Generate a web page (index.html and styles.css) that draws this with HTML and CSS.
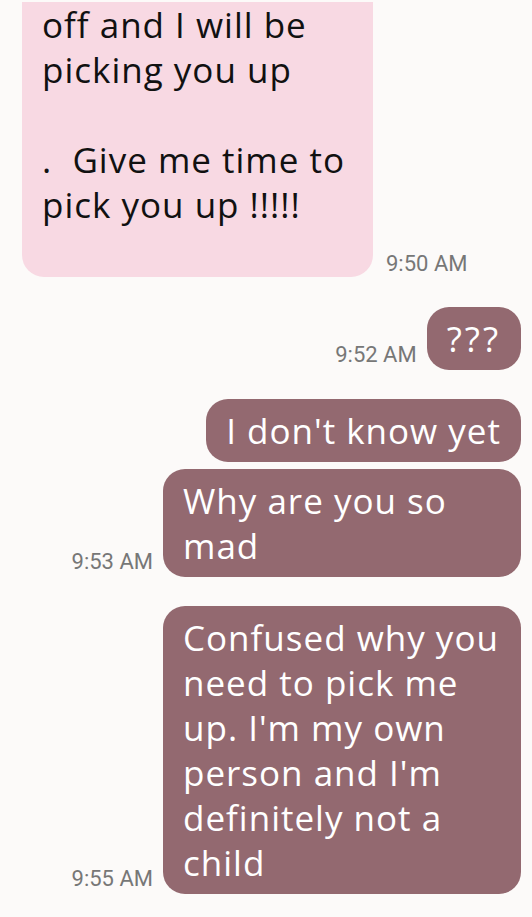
FILE: index.html
```html
<!DOCTYPE html>
<html lang="en">
<head>
    <meta charset="UTF-8">
    <meta name="viewport" content="width=device-width, initial-scale=1.0">
    <title>Messages</title>
    <link rel="stylesheet" href="styles.css">
</head>
<body>
    <div class="thread">
        <div class="row incoming first">
            <div class="bubble in">off and I will be
picking you up

.  Give me time to
pick you up !!!!!</div>
            <span class="time">9:50 AM</span>
        </div>

        <div class="row outgoing gap-first">
            <span class="time">9:52 AM</span>
            <div class="bubble out short">???</div>
        </div>

        <div class="row outgoing gap-big">
            <div class="bubble out">I don't know yet</div>
        </div>

        <div class="row outgoing gap-small">
            <span class="time">9:53 AM</span>
            <div class="bubble out">Why are you so mad</div>
        </div>

        <div class="row outgoing gap-big">
            <span class="time">9:55 AM</span>
            <div class="bubble out">Confused why you need to pick me up. I'm my own person and I'm definitely not a child</div>
        </div>
    </div>
</body>
</html>
```

FILE: styles.css
```css
body {
    margin: 0;
    background-color: #fcfaf9;
    font-family: "Open Sans", Arial, sans-serif;
}
.thread {
    display: flex;
    flex-direction: column;
}
.row {
    display: flex;
    align-items: flex-end;
    gap: 10px;
}
.incoming {
    padding-left: 22px;
    gap: 13px;
}
.outgoing {
    justify-content: flex-end;
    padding-right: 11px;
}
.first {
    margin-top: 2px;
}
.gap-first {
    margin-top: 30px;
}
.gap-big {
    margin-top: 29px;
}
.gap-small {
    margin-top: 7px;
}
.bubble {
    font-size: 35px;
    line-height: 45px;
    letter-spacing: 1px;
    border-radius: 22px;
}
.bubble.in {
    width: 311px;
    padding: 0 20px 50px 20px;
    background-color: #f8d9e3;
    color: #111;
    white-space: pre-wrap;
    border-radius: 0 0 22px 22px;
}
.bubble.out {
    max-width: 318px;
    padding: 9px 20px;
    background-color: #936970;
    color: #fff;
}
.bubble.short {
    letter-spacing: 3px;
}
.time {
    font-family: Roboto, "Open Sans", sans-serif;
    font-size: 22px;
    line-height: 24px;
    color: #777;
    margin-bottom: 3px;
    white-space: nowrap;
}
.incoming .time {
    margin-bottom: 1px;
}
```
